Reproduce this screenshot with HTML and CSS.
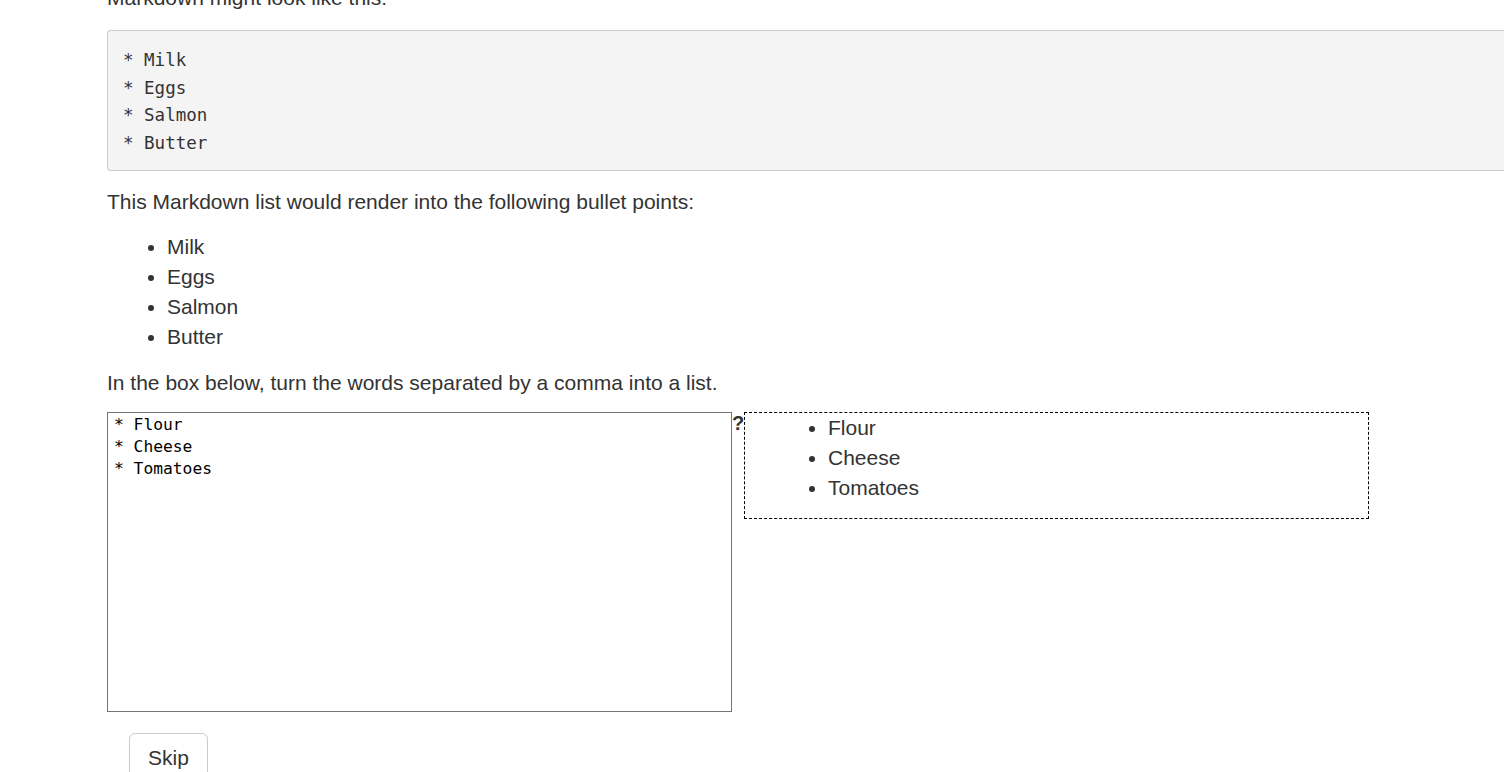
FILE: index.html
```html
<!DOCTYPE html>
<html>
<head>
<meta charset="utf-8">
<link rel="stylesheet" href="styles.css">
</head>
<body>
<div class="page">
  <p class="text first">Markdown might look like this:</p>
  <pre class="code">* Milk
* Eggs
* Salmon
* Butter</pre>
  <p class="text">This Markdown list would render into the following bullet points:</p>
  <ul class="list">
    <li>Milk</li>
    <li>Eggs</li>
    <li>Salmon</li>
    <li>Butter</li>
  </ul>
  <p class="text instructions">In the box below, turn the words separated by a comma into a list.</p>
  <div class="exercise">
    <textarea class="editor">* Flour
* Cheese
* Tomatoes</textarea>
    <span class="help">?</span>
    <div class="preview">
      <ul class="preview-list">
        <li>Flour</li>
        <li>Cheese</li>
        <li>Tomatoes</li>
      </ul>
    </div>
  </div>
  <div class="actions">
    <button class="btn">Skip</button>
  </div>
</div>
</body>
</html>
```
FILE: styles.css
```css
html, body {
  margin: 0;
  padding: 0;
  background: #fff;
  overflow: hidden;
}
body {
  font-family: "Liberation Sans", Arial, sans-serif;
  font-size: 21px;
  color: #333;
}
.page {
  margin-top: -17px;
  padding-left: 107px;
}
.text {
  margin: 0 0 15px;
  line-height: 30px;
}
.text.first {
  margin-bottom: 17px;
}
.text.instructions {
  margin-bottom: 14px;
}
.code {
  margin: 0 0 16px;
  padding: 16px 15px 12px;
  background: #f4f4f4;
  border: 1px solid #ccc;
  border-radius: 4px 0 0 4px;
  border-right: none;
  font-family: "DejaVu Sans Mono", "Liberation Mono", monospace;
  font-size: 17.5px;
  line-height: 27.7px;
  color: #333;
  width: 1500px;
}
.list {
  margin: 0 0 16px;
  padding-left: 60px;
}
.list li {
  line-height: 30px;
}
.exercise {
  display: flex;
  align-items: flex-start;
}
.editor {
  box-sizing: border-box;
  width: 625px;
  height: 300px;
  margin: 0;
  padding: 1px 6px;
  border: 1px solid #767676;
  resize: none;
  font-family: "DejaVu Sans Mono", "Liberation Mono", monospace;
  font-size: 16.3px;
  line-height: 22px;
  color: #000;
}
.help {
  width: 12px;
  font-weight: bold;
  font-size: 20px;
  line-height: 22px;
  color: #333;
}
.preview {
  box-sizing: border-box;
  width: 625px;
  min-height: 107px;
  border: 1px dashed #000;
}
.preview-list {
  margin: 0 0 14px;
  padding-left: 83px;
}
.preview-list li {
  line-height: 30px;
}
.actions {
  padding: 21px 0 0 22px;
}
.btn {
  font-family: "Liberation Sans", Arial, sans-serif;
  font-size: 21px;
  color: #333;
  background: #fff;
  border: 1px solid #ccc;
  border-radius: 6px;
  padding: 10px 18px;
  line-height: 27px;
}
```
